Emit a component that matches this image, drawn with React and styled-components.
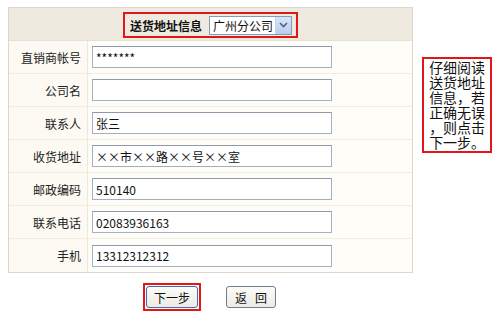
import React from 'react';
import styled, { createGlobalStyle } from 'styled-components';

const GlobalStyle = createGlobalStyle`
  body {
    margin: 7px 8px;
    background: #fff;
    font-family: "Noto Sans CJK SC", "Liberation Sans", sans-serif;
    font-size: 12px;
    color: #222;
  }
`;

const fields = [
  { label: '直销商帐号', value: '*******' },
  { label: '公司名', value: '' },
  { label: '联系人', value: '张三' },
  { label: '收货地址', value: '××市××路××号××室' },
  { label: '邮政编码', value: '510140' },
  { label: '联系电话', value: '02083936163' },
  { label: '手机', value: '13312312312' },
];

const noteLines = ['仔细阅读', '送货地址', '信息，若', '正确无误', '，则点击', '下一步。'];

const App = () => (
  <>
    <GlobalStyle />
    <Page>
      <Left>
        <Form>
          <Header>
            <Highlight>
              <HeaderTitle>送货地址信息</HeaderTitle>
              <Select>
                <SelectText>广州分公司</SelectText>
                <SelectArrow>
                  <svg width="9" height="6" viewBox="0 0 9 6">
                    <path d="M1 1 L4.5 4.5 L8 1" fill="none" stroke="#4d6185" strokeWidth="1.6" />
                  </svg>
                </SelectArrow>
              </Select>
            </Highlight>
          </Header>
          {fields.map((f) => (
            <Row key={f.label}>
              <Label>{f.label}</Label>
              <Cell>
                <Input defaultValue={f.value} />
              </Cell>
            </Row>
          ))}
        </Form>
        <Actions>
          <Focus>
            <Button>下一步</Button>
          </Focus>
          <Button $back>返&nbsp;&nbsp;&nbsp;回</Button>
        </Actions>
      </Left>
      <Note>
        {noteLines.map((l) => (
          <NoteLine key={l}>{l}</NoteLine>
        ))}
      </Note>
    </Page>
  </>
);

const Page = styled.div`
  display: flex;
  align-items: flex-start;
  gap: 9px;
`;
const Left = styled.div`
  display: flex;
  flex-direction: column;
  width: 406px;
`;
const Form = styled.div`
  border: 1px solid #dcd7cb;
  background: #fffdf8;
`;
const Header = styled.div`
  height: 32px;
  display: flex;
  align-items: center;
  justify-content: center;
  background: #eeeae0;
  border-bottom: 1px solid #e6e1d4;
`;
const Highlight = styled.div`
  display: flex;
  align-items: center;
  gap: 7px;
  height: 20px;
  padding: 1px 4px 1px 5px;
  border: 2px solid #e0161b;
  margin-top: 2px;
`;
const HeaderTitle = styled.span`
  font-weight: bold;
  font-size: 12px;
  color: #111;
`;
const Select = styled.div`
  display: flex;
  align-items: center;
  width: 83px;
  height: 19px;
  box-sizing: border-box;
  border: 1px solid #7f9db9;
  background: #fff;
`;
const SelectText = styled.span`
  flex: 1;
  padding-left: 3px;
  font-size: 12px;
  color: #111;
  line-height: 17px;
  white-space: nowrap;
`;
const SelectArrow = styled.span`
  width: 15px;
  height: 17px;
  display: flex;
  align-items: center;
  justify-content: center;
  background: linear-gradient(#dbe5f8, #b9cbee);
  border-left: 1px solid #c3d3fd;
`;
const Row = styled.div`
  display: flex;
  height: 32px;
  border-bottom: 1px solid #f1ece1;
  &:last-child {
    height: 33px;
    border-bottom: none;
  }
`;
const Label = styled.div`
  width: 79px;
  flex-shrink: 0;
  display: flex;
  align-items: center;
  justify-content: flex-end;
  padding-right: 6px;
  box-sizing: border-box;
  background: #fcfaf3;
  border-right: 1px solid #ede8dc;
  color: #222;
`;
const Cell = styled.div`
  flex: 1;
  display: flex;
  align-items: center;
  padding-left: 4px;
`;
const Input = styled.input`
  width: 240px;
  height: 22px;
  box-sizing: border-box;
  border: 1px solid #a4b0bf;
  border-top-color: #8e9aab;
  padding: 0 3px;
  font-family: "Noto Sans CJK SC", "Liberation Sans", sans-serif;
  font-size: 12px;
  color: #111;
  background: #fff;
  outline: none;
`;
const Actions = styled.div`
  display: flex;
  justify-content: center;
  align-items: center;
  gap: 25px;
  margin-top: 10px;
  padding-right: 2px;
`;
const Focus = styled.div`
  border: 2px solid #e0161b;
  padding: 1px;
  display: flex;
`;
const Button = styled.button`
  width: ${(p) => (p.$back ? '50px' : '52px')};
  height: 22px;
  padding: 0;
  border: 1px solid ${(p) => (p.$back ? '#6f7f8f' : '#4a6aa8')};
  border-radius: 3px;
  background: linear-gradient(#fbfbf8, #ecebe5);
  font-family: "Noto Sans CJK SC", "Liberation Sans", sans-serif;
  font-size: 12px;
  color: #111;
`;
const Note = styled.div`
  margin-top: 50px;
  width: 70px;
  box-sizing: border-box;
  padding: 1px 0 1px 5px;
  border: 2px solid #e0161b;
  font-family: "Noto Sans CJK SC", sans-serif;
  font-size: 14px;
  color: #111;
`;
const NoteLine = styled.div`
  height: 15px;
  line-height: 15px;
  white-space: nowrap;
`;

export default App;
